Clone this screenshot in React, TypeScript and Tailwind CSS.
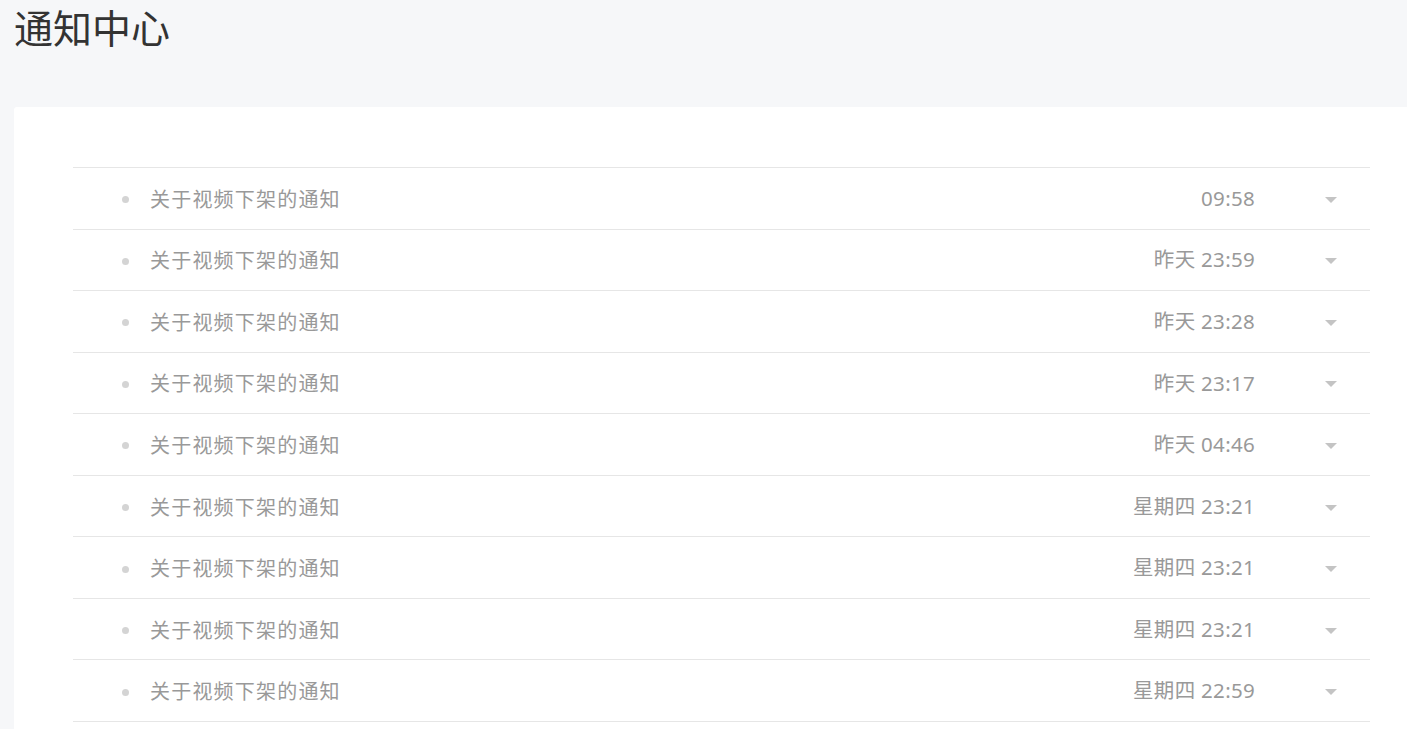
import React from 'react';

const items = [
  { title: '关于视频下架的通知', time: '09:58' },
  { title: '关于视频下架的通知', time: '昨天 23:59' },
  { title: '关于视频下架的通知', time: '昨天 23:28' },
  { title: '关于视频下架的通知', time: '昨天 23:17' },
  { title: '关于视频下架的通知', time: '昨天 04:46' },
  { title: '关于视频下架的通知', time: '星期四 23:21' },
  { title: '关于视频下架的通知', time: '星期四 23:21' },
  { title: '关于视频下架的通知', time: '星期四 23:21' },
  { title: '关于视频下架的通知', time: '星期四 22:59' },
];

const App: React.FC = () => {
  return (
    <div
      className="h-[729px] overflow-hidden bg-[#f6f7f9] pl-[14px]"
      style={{ fontFamily: '"Noto Sans", "Noto Sans CJK SC", sans-serif' }}
    >
      {/* 标题 */}
      <h1 className="pt-[3px] h-[107px] text-[39px] leading-[50px] text-[#333] font-normal">通知中心</h1>

      {/* 通知列表 */}
      <div className="mr-[-40px] bg-white rounded-tl-[3px] pt-[60px] pl-[59px] pr-[59px] min-h-[700px]">
        <ul className="w-[1297px] border-t border-[#e6e6e6]">
          {items.map((item, i) => (
            <li
              key={i}
              className="h-[61.56px] pt-[3px] flex items-center border-b border-[#e6e6e6] text-[#999]"
            >
              <span className="ml-[49px] w-[7px] h-[7px] rounded-full bg-[#d4d4d4]" />
              <span className="ml-[21px] text-[20px] tracking-[1.2px]">{item.title}</span>
              <span className="ml-auto -mt-[3px] text-[20.5px] tracking-[0.3px]">{item.time}</span>
              <span className="ml-[70px] mr-[33px] w-0 h-0 border-l-[6px] border-r-[6px] border-t-[6px] border-l-transparent border-r-transparent border-t-[#c4c4c4]" />
            </li>
          ))}
        </ul>
      </div>
    </div>
  );
};

export default App;
